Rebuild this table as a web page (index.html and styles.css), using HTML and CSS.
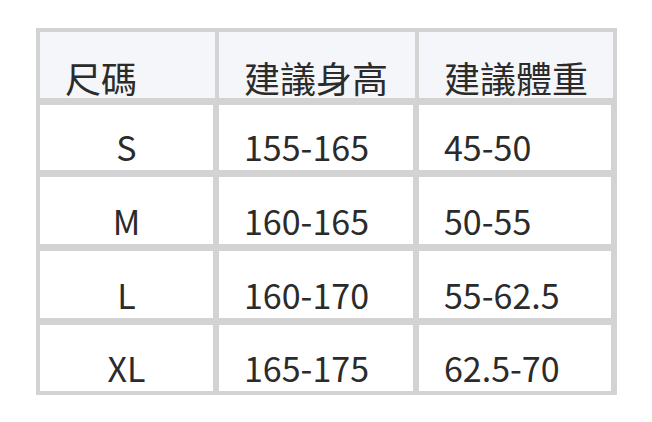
FILE: index.html
```html
<!DOCTYPE html>
<html lang="zh-Hant">
<head>
<meta charset="utf-8">
<title>尺碼表</title>
<link rel="stylesheet" href="styles.css">
</head>
<body>
<div class="chart">
  <div class="cell head">尺碼</div>
  <div class="cell head">建議身高</div>
  <div class="cell head">建議體重</div>

  <div class="cell body center">S</div>
  <div class="cell body">155-165</div>
  <div class="cell body">45-50</div>

  <div class="cell body center">M</div>
  <div class="cell body">160-165</div>
  <div class="cell body">50-55</div>

  <div class="cell body center">L</div>
  <div class="cell body">160-170</div>
  <div class="cell body">55-62.5</div>

  <div class="cell body center">XL</div>
  <div class="cell body">165-175</div>
  <div class="cell body">62.5-70</div>
</div>
</body>
</html>
```

FILE: styles.css
```css
html, body {
  margin: 0;
  padding: 0;
  background: #ffffff;
}

body {
  padding: 28px 0 0 36px;
  font-family: "Noto Sans CJK TC", "Noto Sans CJK SC", "Noto Sans", sans-serif;
  font-weight: 400;
  color: #2b2b2b;
}

.chart {
  display: grid;
  width: 573px;
  grid-template-columns: 175px 196px 194px;
  grid-template-rows: 66px 65px 67px 67px 66px;
  column-gap: 4px;
  row-gap: 7px;
  padding: 4px;
  background: #d3d3d3;
}

.cell {
  display: flex;
  align-items: flex-end;
  padding: 0 0 6px 25px;
  font-size: 34px;
  line-height: 34px;
  background: #ffffff;
}

.head {
  background: #f5f6fa;
  padding-bottom: 3px;
  font-size: 36px;
  line-height: 36px;
}

.body {
  margin-right: 2px;
}

.center {
  justify-content: center;
  padding-left: 0;
}
```
